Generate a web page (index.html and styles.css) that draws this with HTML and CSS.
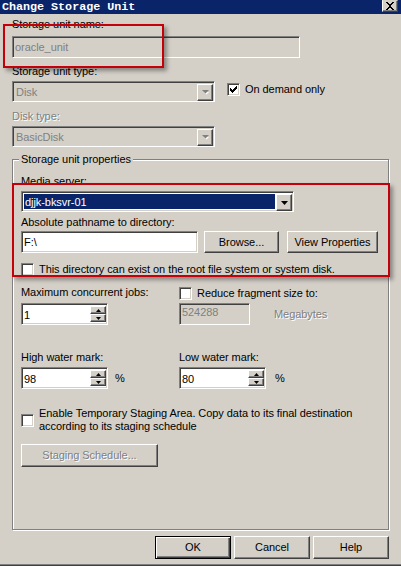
FILE: index.html
```html
<!DOCTYPE html>
<html>
<head>
<meta charset="utf-8">
<link rel="stylesheet" href="styles.css">
</head>
<body>
<div class="window">
  <div class="titlebar">
    <span class="title">Change Storage Unit</span>
    <span class="close"><svg width="10" height="8" viewBox="0 0 10 8"><path d="M1 0 L3 0 L5 3 L7 0 L9 0 L6 4 L9 8 L7 8 L5 5 L3 8 L1 8 L4 4 Z" fill="#000" shape-rendering="crispEdges"/></svg></span>
  </div>
  <div class="content">
    <div class="lbl l1">Storage unit name:</div>
    <div class="field dis name">oracle_unit</div>
    <div class="lbl l2">Storage unit type:</div>
    <div class="row r-type">
      <div class="combo dis w203"><span class="ctext">Disk</span><span class="btn ddbtn"><svg width="7" height="5" viewBox="0 0 7 5"><path d="M1 1 L6 1 L3.5 3.6 Z" fill="#fff" transform="translate(1,1)"/><path d="M0 0 L7 0 L3.5 3.6 Z" fill="#808080"/></svg></span></div>
      <div class="chkrow ondemand"><span class="chk"><svg width="7" height="7" viewBox="0 0 7 7" shape-rendering="crispEdges"><path d="M6 0 H7 V3 H6 V4 H5 V5 H4 V6 H3 V7 H2 V6 H1 V5 H0 V2 H1 V3 H2 V4 H3 V3 H4 V2 H5 V1 H6 Z" fill="#000"/></svg></span><span>On demand only</span></div>
    </div>
    <div class="lbl dislbl l3">Disk type:</div>
    <div class="combo dis w203 c2"><span class="ctext">BasicDisk</span><span class="btn ddbtn"><svg width="7" height="5" viewBox="0 0 7 5"><path d="M1 1 L6 1 L3.5 3.6 Z" fill="#fff" transform="translate(1,1)"/><path d="M0 0 L7 0 L3.5 3.6 Z" fill="#808080"/></svg></span></div>

    <fieldset class="group">
      <legend>Storage unit properties</legend>
      <div class="lbl">Media server:</div>
      <div class="combo media"><span class="sel">djjk-bksvr-01</span><span class="btn ddbtn"><svg width="7" height="4" viewBox="0 0 7 4"><path d="M0 0 L7 0 L3.5 4 Z" fill="#000"/></svg></span></div>
      <div class="lbl l-abs">Absolute pathname to directory:</div>
      <div class="row pathrow">
        <div class="field path">F:\</div>
        <div class="btn pbtn browse">Browse...</div>
        <div class="btn pbtn viewprops">View Properties</div>
      </div>
      <div class="chkrow rootrow"><span class="chk"></span><span>This directory can exist on the root file system or system disk.</span></div>

      <div class="grid2 jobs">
        <div class="col">
          <div class="lbl">Maximum concurrent jobs:</div>
          <div class="field spin"><span class="stext">1</span><span class="spinbtns"><span class="btn sbtn"><svg width="5" height="3" viewBox="0 0 5 3"><path d="M2.5 0 L5 3 L0 3 Z" fill="#000"/></svg></span><span class="btn sbtn"><svg width="5" height="3" viewBox="0 0 5 3"><path d="M0 0 L5 0 L2.5 3 Z" fill="#000"/></svg></span></span></div>
        </div>
        <div class="col">
          <div class="chkrow reduce"><span class="chk"></span><span>Reduce fragment size to:</span></div>
          <div class="row fragrow">
            <div class="field dis frag">524288</div>
            <span class="dislbl mb">Megabytes</span>
          </div>
        </div>
      </div>

      <div class="grid2 water">
        <div class="col">
          <div class="lbl">High water mark:</div>
          <div class="row wrow">
            <div class="field spin"><span class="stext">98</span><span class="spinbtns"><span class="btn sbtn"><svg width="5" height="3" viewBox="0 0 5 3"><path d="M2.5 0 L5 3 L0 3 Z" fill="#000"/></svg></span><span class="btn sbtn"><svg width="5" height="3" viewBox="0 0 5 3"><path d="M0 0 L5 0 L2.5 3 Z" fill="#000"/></svg></span></span></div>
            <span class="pct">%</span>
          </div>
        </div>
        <div class="col">
          <div class="lbl">Low water mark:</div>
          <div class="row wrow">
            <div class="field spin"><span class="stext">80</span><span class="spinbtns"><span class="btn sbtn"><svg width="5" height="3" viewBox="0 0 5 3"><path d="M2.5 0 L5 3 L0 3 Z" fill="#000"/></svg></span><span class="btn sbtn"><svg width="5" height="3" viewBox="0 0 5 3"><path d="M0 0 L5 0 L2.5 3 Z" fill="#000"/></svg></span></span></div>
            <span class="pct">%</span>
          </div>
        </div>
      </div>

      <div class="chkrow staging"><span class="chk"></span><span>Enable Temporary Staging Area. Copy data to its final destination<br>according to its staging schedule</span></div>
      <div class="btn stagebtn dislbl">Staging Schedule...</div>
    </fieldset>

    <div class="buttons">
      <div class="btn dbtn default">OK</div>
      <div class="btn dbtn">Cancel</div>
      <div class="btn dbtn">Help</div>
    </div>
  </div>
  <div class="annot a1"></div>
  <div class="annot a2"></div>
</div>
</body>
</html>
```

FILE: styles.css
```css
* { box-sizing: border-box; }
html, body { margin: 0; padding: 0; }
body {
  background: #d4d0c8;
  font-family: "Liberation Sans", Arial, sans-serif;
  font-size: 11px;
  line-height: 13px;
  letter-spacing: -0.06px;
  color: #000;
  width: 401px;
  height: 566px;
  overflow: hidden;
}
.window {
  position: relative;
  width: 401px;
  height: 566px;
  background: #d4d0c8;
  border-bottom: 1px solid #404040;
  box-shadow: inset 0 -1px 0 #808080;
}
.titlebar {
  height: 14px;
  background: #0a246a;
  display: flex;
  justify-content: space-between;
  align-items: flex-start;
  padding: 0 3px 0 2px;
}
.title {
  font-family: "Liberation Mono", "Courier New", monospace;
  font-weight: bold;
  font-size: 11.7px;
  line-height: 14px;
  letter-spacing: 0;
  color: #fff;
  white-space: pre;
}
.close {
  width: 16px;
  height: 12px;
  background: #d4d0c8;
  border: 1px solid;
  border-color: #d4d0c8 #404040 #404040 #fff;
  box-shadow: inset -1px -1px #808080;
  display: flex;
  align-items: center;
  justify-content: center;
}
.content { padding-left: 12px; }

.lbl { line-height: 13px; white-space: nowrap; }
.dislbl { color: #808080; text-shadow: 1px 1px 0 #fff; }
.l1 { margin-top: 4px; }
.l2 { margin-top: 7px; }
.l3 { margin-top: 8px; }

.field {
  height: 22px;
  background: #fff;
  border: 1px solid;
  border-color: #808080 #fff #fff #808080;
  box-shadow: inset 1px 1px #404040, inset -1px -1px #d4d0c8;
  padding-left: 2px;
  display: flex;
  align-items: center;
  white-space: nowrap;
}
.field.dis { background: #d4d0c8; color: #808080; }
.name { width: 288px; margin-top: 5px; }

.row { display: flex; align-items: center; }
.r-type { margin-top: 3px; align-items: flex-start; }

.combo {
  height: 21px;
  background: #fff;
  border: 1px solid;
  border-color: #808080 #fff #fff #808080;
  box-shadow: inset 1px 1px #404040, inset -1px -1px #d4d0c8;
  padding: 2px 1px 2px 2px;
  display: flex;
  align-items: stretch;
}
.combo.dis { background: #d4d0c8; color: #808080; }
.w203 { width: 203px; }
.c2 { margin-top: 3px; }
.ctext { flex: 1; line-height: 17px; padding-left: 1px; }

.btn {
  background: #d4d0c8;
  border: 1px solid;
  border-color: #fff #404040 #404040 #fff;
  box-shadow: inset -1px -1px #808080, inset 1px 1px #d4d0c8;
  display: flex;
  align-items: center;
  justify-content: center;
  white-space: nowrap;
}
.ddbtn { width: 16px; height: 17px; }

.chkrow { display: flex; align-items: center; white-space: nowrap; }
.chk {
  width: 13px;
  height: 13px;
  flex: none;
  background: #fff;
  border: 1px solid;
  border-color: #808080 #fff #fff #808080;
  box-shadow: inset 1px 1px #404040, inset -1px -1px #d4d0c8;
  display: flex;
  align-items: center;
  justify-content: center;
  margin-right: 5px;
}
.ondemand { margin-left: 12px; margin-top: 2px; }

.group {
  margin: 6px 0 0 0;
  width: 377px;
  border: 1px solid #808080;
  box-shadow: inset 1px 1px #fff, 1px 1px 0 #fff;
  padding: 9px 10px 62px 8px;
  min-width: 0;
}
.group legend {
  padding: 0 2px;
  margin-left: -2px;
  background: #d4d0c8;
  line-height: 13px;
}
.media { width: 273px; margin-top: 3px; }
.sel {
  flex: 1;
  background: #0a246a;
  color: #fff;
  line-height: 16px;
  padding-left: 1px;
  margin-right: 1px;
}
.l-abs { margin-top: 4px; }
.pathrow { margin-top: 2px; }
.path { width: 177px; }
.pbtn { height: 22px; }
.browse { width: 75px; margin-left: 6px; }
.viewprops { width: 91px; margin-left: 8px; }
.rootrow { margin-top: 10px; }

.grid2 { display: grid; grid-template-columns: 158px 1fr; }
.jobs { margin-top: 10px; }
.spin { width: 87px; padding: 2px 1px 2px 2px; align-items: stretch; }
.stext { flex: 1; line-height: 18px; }
.spinbtns { display: flex; flex-direction: column; width: 16px; }
.sbtn { height: 9px; }
.fragrow { margin-top: 3px; }
.reduce { margin-top: 1px; }
.frag { width: 71px; align-items: flex-start; padding-top: 2px; }
.mb { margin-left: 24px; }
.jobs .spin { margin-top: 4px; }

.water { margin-top: 26px; }
.wrow { margin-top: 3px; }
.pct { margin-left: 7px; }
.water .col:last-child .pct { margin-left: 9px; }

.staging { margin-top: 18px; white-space: nowrap; }
.stagebtn { width: 137px; height: 23px; margin-top: 11px; }

.buttons { display: flex; justify-content: flex-end; gap: 3px; width: 377px; margin-top: 6px; }
.dbtn { width: 76px; height: 23px; }
.default {
  border: 1px solid #000;
  box-shadow: inset 1px 1px #fff, inset -1px -1px #404040, inset -2px -2px #808080;
}

.annot {
  position: absolute;
  border: 2px solid #c4000a;
  box-shadow: 3px 3px 4px rgba(0,0,0,0.35);
}
.a1 { left: 3px; top: 24px; width: 161px; height: 44px; }
.a2 { left: 12px; top: 183px; width: 378px; height: 94px; }
```
